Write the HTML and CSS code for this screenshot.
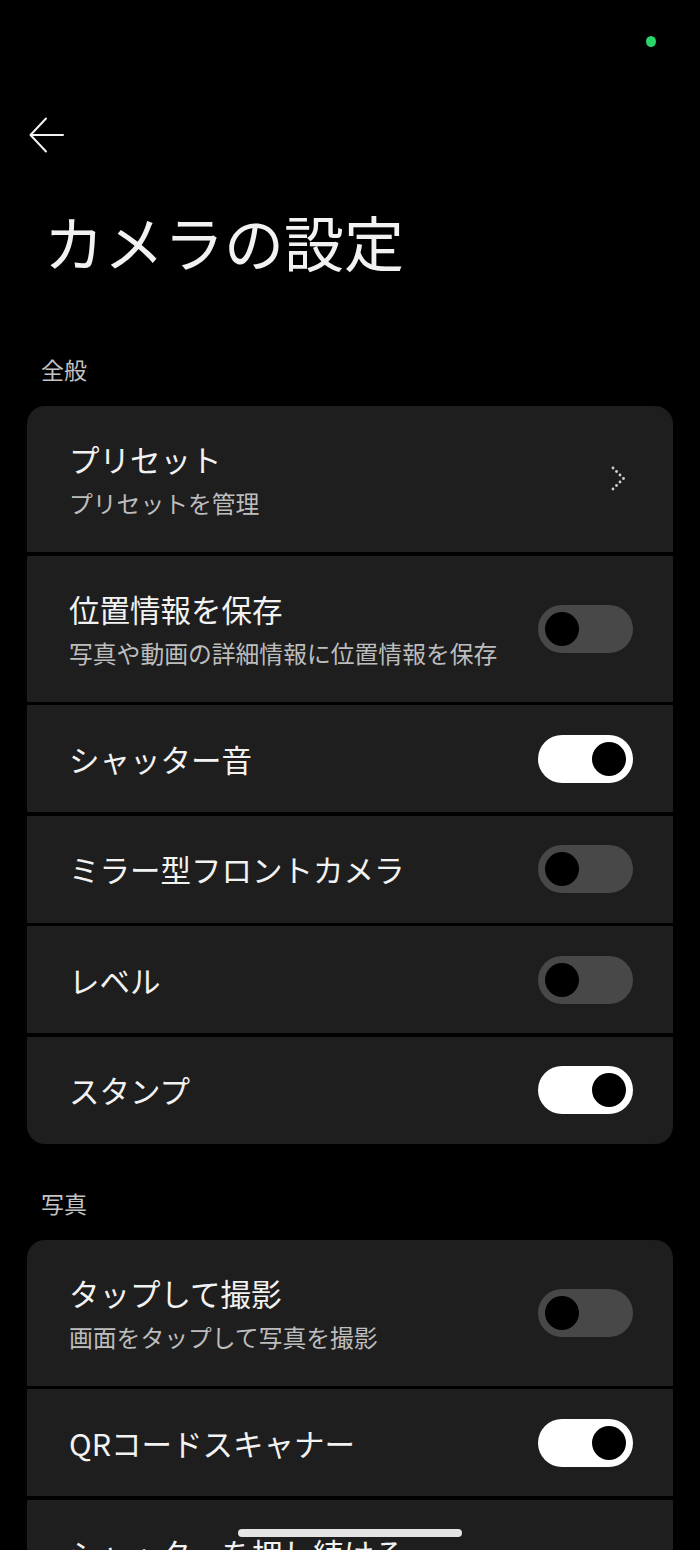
FILE: index.html
```html
<!DOCTYPE html>
<html lang="ja">
<head>
<meta charset="utf-8">
<title>カメラの設定</title>
<link rel="stylesheet" href="styles.css">
</head>
<body>
<div class="screen">
  <div class="status"><span class="dot"></span></div>
  <div class="topbar">
    <svg class="back" width="36" height="36" viewBox="0 0 36 36" fill="none" stroke="#f2f2f2" stroke-width="2" stroke-linecap="round" stroke-linejoin="round">
      <path d="M34 18H2M17 1.5L1.5 18L17 34.5"/>
    </svg>
  </div>
  <h1 class="title">カメラの設定</h1>

  <div class="section-label">全般</div>
  <div class="card">
    <div class="row row-two">
      <div class="text">
        <div class="row-title">プリセット</div>
        <div class="row-sub">プリセットを管理</div>
      </div>
      <svg class="chev" width="16" height="26" viewBox="0 0 16 26" fill="#cfcfcf">
        <circle cx="2" cy="2" r="1.4"/><circle cx="5.5" cy="5.5" r="1.4"/><circle cx="9" cy="9" r="1.4"/><circle cx="12.5" cy="12.5" r="1.4"/>
        <circle cx="9" cy="16" r="1.4"/><circle cx="5.5" cy="19.5" r="1.4"/><circle cx="2" cy="23" r="1.4"/>
      </svg>
    </div>
    <div class="row row-two">
      <div class="text">
        <div class="row-title">位置情報を保存</div>
        <div class="row-sub">写真や動画の詳細情報に位置情報を保存</div>
      </div>
      <span class="toggle"><span class="knob"></span></span>
    </div>
    <div class="row">
      <div class="row-title">シャッター音</div>
      <span class="toggle on"><span class="knob"></span></span>
    </div>
    <div class="row">
      <div class="row-title">ミラー型フロントカメラ</div>
      <span class="toggle"><span class="knob"></span></span>
    </div>
    <div class="row">
      <div class="row-title">レベル</div>
      <span class="toggle"><span class="knob"></span></span>
    </div>
    <div class="row">
      <div class="row-title">スタンプ</div>
      <span class="toggle on"><span class="knob"></span></span>
    </div>
  </div>

  <div class="section-label">写真</div>
  <div class="card">
    <div class="row row-two">
      <div class="text">
        <div class="row-title">タップして撮影</div>
        <div class="row-sub">画面をタップして写真を撮影</div>
      </div>
      <span class="toggle"><span class="knob"></span></span>
    </div>
    <div class="row">
      <div class="row-title">QRコードスキャナー</div>
      <span class="toggle on"><span class="knob"></span></span>
    </div>
    <div class="row">
      <div class="row-title">シャッターを押し続ける</div>
    </div>
  </div>
</div>
<div class="home-indicator"></div>
</body>
</html>
```
FILE: styles.css
```css
html, body {
  margin: 0;
  padding: 0;
  height: 1550px;
  overflow: hidden;
  background: #000;
}
body {
  font-family: "Noto Sans CJK JP", "Noto Sans", sans-serif;
  color: #f2f2f2;
}
.screen {
  display: flex;
  flex-direction: column;
}
.status {
  height: 82px;
  display: flex;
  justify-content: flex-end;
  align-items: center;
  padding-right: 44px;
}
.dot {
  width: 10px;
  height: 11px;
  border-radius: 50%;
  background: #2bd46a;
}
.topbar {
  height: 106px;
  display: flex;
  align-items: center;
  padding-left: 29px;
}
.back { display: block; }
.title {
  margin: 17px 0 0 44px;
  font-size: 60px;
  line-height: 72px;
  font-weight: 400;
  letter-spacing: 0;
}
.section-label {
  margin: 76px 0 0 41px;
  font-size: 23px;
  line-height: 32px;
  color: #c4c4c4;
}
.section-label + .card { margin-top: 21px; }
.card + .section-label { margin-top: 43px; }
.card {
  margin: 0 27px;
  border-radius: 18px;
  overflow: hidden;
  display: flex;
  flex-direction: column;
  gap: 3.5px;
}
.row {
  background: #1e1e1e;
  height: 107px;
  display: flex;
  align-items: center;
  justify-content: space-between;
  padding: 0 40px 0 42px;
  box-sizing: border-box;
  flex-shrink: 0;
}
.row-two { height: 146px; }
.row-title {
  font-size: 30.5px;
  line-height: 40px;
  color: #f2f2f2;
}
.row-sub {
  margin-top: 8px;
  font-size: 23.8px;
  line-height: 32px;
  color: #bdbdbd;
}
.chev { margin-right: 6px; }
.toggle {
  width: 95px;
  height: 48px;
  border-radius: 24px;
  background: #484848;
  display: flex;
  align-items: center;
  padding: 0 7px;
  box-sizing: border-box;
  flex-shrink: 0;
}
.toggle.on {
  background: #ffffff;
  justify-content: flex-end;
}
.knob {
  width: 34px;
  height: 34px;
  border-radius: 50%;
  background: #000;
}
.home-indicator {
  position: fixed;
  left: 238px;
  top: 1529px;
  width: 224px;
  height: 8px;
  border-radius: 4px;
  background: #e4e4e4;
}
```
